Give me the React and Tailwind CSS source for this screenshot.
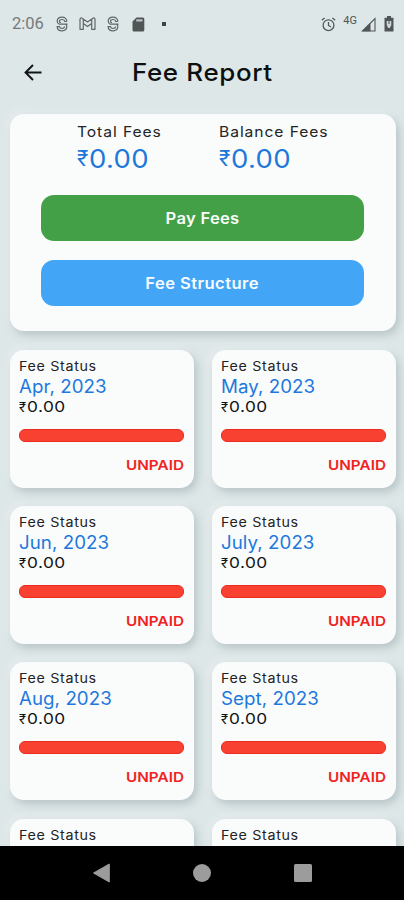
const months = ["Apr, 2023", "May, 2023", "Jun, 2023", "July, 2023", "Aug, 2023", "Sept, 2023"];

const cardShadow =
  "shadow-[3px_4px_8px_rgba(120,140,145,0.38),-3px_-3px_7px_rgba(255,255,255,0.3)]";

function SwirlIcon() {
  return (
    <svg width="12" height="16" viewBox="0 0 12 16" fill="none" stroke="#5f6666" strokeWidth="1.2">
      <path d="M10.800 5.500C10.800 2.800 9 1.200 6 1.200S1.200 2.800 1.200 5.300c0 1.500.7 2.500 2 2.900h8.300M10.800 5.500H8.700C8.500 4.200 7.500 3.500 6 3.500s-2.500.7-2.500 1.900c0 .8.500 1.100 1.500 1.100M9.500 8.200c.9.400 1.300 1.200 1.300 2.400 0 2.600-1.800 4.200-4.800 4.200s-4.800-1.600-4.800-4.100h2.300c.2 1.200 1 1.800 2.500 1.800s2.500-.7 2.500-1.900" />
    </svg>
  );
}

function MailIcon() {
  return (
    <svg width="17" height="14" viewBox="0 0 17 14" fill="none" stroke="#5f6666" strokeWidth="1.2" strokeLinejoin="round">
      <path d="M1 12.300V2.300C1 1 2.400.6 3.400 1.400L8.500 5l5.100-3.600C14.600.6 16 1 16 2.300v10h-3.300V6.400L8.500 9.400 4.300 6.400v5.900zM4.300 6.400V2.300M12.700 6.400V2.300" />
    </svg>
  );
}

function SdCardIcon() {
  return (
    <svg width="13" height="15" viewBox="0 0 13 15">
      <path d="M4.500.5h6.300A1.500 1.500 0 0 1 12.300 2v11a1.500 1.500 0 0 1-1.500 1.500H2A1.500 1.500 0 0 1 .5 13V4.500z" fill="#505656" />
      <path d="M4.200 2.300h6.300v2.200H4.200z" fill="#b9c1c1" />
    </svg>
  );
}

function AlarmIcon() {
  return (
    <svg width="15" height="15" viewBox="0 0 15 15" fill="none" stroke="#535959" strokeWidth="1.300">
      <circle cx="7.500" cy="8.200" r="5.400" />
      <path d="M7.500 5v3.500l2.500 1.500M.8 3.300 3.600 1M14.200 3.300 11.400 1" />
    </svg>
  );
}

function SignalIcon() {
  return (
    <svg width="15" height="15" viewBox="0 0 15 15">
      <path d="M1.500 14 14 1.500V14z" fill="none" stroke="#505656" strokeWidth="1.100" />
      <path d="M1 14.300 9.500 6v8.300z" fill="#505656" />
    </svg>
  );
}

function BatteryIcon() {
  return (
    <svg width="10" height="16" viewBox="0 0 10 16">
      <path d="M3 0h4v1.800h2.500V15.500H.5V1.800H3z" fill="#505656" />
      <path d="M2.700 5h4.600v4L5.800 12H4.200L2.700 9z" fill="#cdd5d5" />
      <path d="M5 5v3" stroke="#505656" strokeWidth="1" />
    </svg>
  );
}

function StatusBar() {
  return (
    <div className="flex h-12 shrink-0 items-center pl-3 pr-[10px]">
      <span className="w-[44px] whitespace-nowrap font-['Roboto',sans-serif] text-[16.500px] leading-5 text-[#747a7a]">2:06</span>
      <SwirlIcon />
      <div className="ml-[11px]"><MailIcon /></div>
      <div className="ml-[11px]"><SwirlIcon /></div>
      <div className="ml-[13px]"><SdCardIcon /></div>
      <div className="ml-[17px] size-1 bg-[#3f4545]" />
      <div className="ml-auto pr-[1px]"><AlarmIcon /></div>
      <span className="ml-[6px] -mt-1.5 font-['Roboto',sans-serif] text-[11px] leading-3 text-[#505656]">4G</span>
      <div className="ml-[4px]"><SignalIcon /></div>
      <div className="ml-[8px]"><BatteryIcon /></div>
    </div>
  );
}

function Total({ label }) {
  return (
    <div>
      <div className="origin-left scale-x-[1.08] whitespace-nowrap text-[14.500px] leading-5 tracking-[0.850px] text-[#252525]">{label}</div>
      <div className="flex items-center text-[25px] leading-[34px] text-[#1d78da]">
        <span className="mr-[1px] text-[21px]">₹</span>
        <span className="origin-left scale-x-[1.1] tracking-[0.300px]">0.00</span>
      </div>
    </div>
  );
}

function FeeCard({ month }) {
  return (
    <div className={`h-[138px] rounded-[14px] bg-[#fafcfc] pl-[9px] pr-[10px] pt-[6px] ${cardShadow}`}>
      <div className="origin-left scale-x-[1.1] text-[13px] leading-5 tracking-[0.600px] text-[#222]">Fee Status</div>
      {month && (
        <>
          <div className="origin-left scale-x-[1.04] whitespace-nowrap pt-px text-[18px] leading-5 tracking-[0.050px] text-[#1f78dc]">{month}</div>
          <div className="flex items-center text-[15px] leading-5 text-[#111]">
            <span className="mr-[1px] text-[13px]">₹</span>
            <span className="origin-left scale-x-[1.15] tracking-[0.400px]">0.00</span>
          </div>
          <div className="mt-[12px] h-[13px] rounded-[6px] border border-[#ee2b1f] bg-[#f94132]" />
          <div className="mt-[13px] origin-right scale-x-[1.13] text-right text-[13.500px] font-semibold leading-5 tracking-[0.050px] text-[#f02320]">UNPAID</div>
        </>
      )}
    </div>
  );
}

export default function App() {
  return (
    <div className="flex h-[900px] w-[404px] flex-col overflow-hidden bg-[#dee7e8] font-['Inter','Noto_Sans',sans-serif]">
      <StatusBar />
      <header className="flex h-[50px] shrink-0 items-center pl-[23px]">
        <svg width="20" height="20" viewBox="0 0 20 20" fill="none" stroke="#111414" strokeWidth="1.900">
          <path d="M18.500 9.500H2.500M10 2 2.500 9.500 10 17" />
        </svg>
        <h1 className="ml-[89px] origin-left scale-x-[1.08] whitespace-nowrap text-[24px] font-medium leading-8 tracking-[0.600px] text-[#0d1010]">Fee Report</h1>
      </header>
      <main className="min-h-0 flex-1 overflow-hidden pl-[10px] pr-[8px] pt-4">
        <section className={`h-[217px] rounded-[14px] bg-[#fafcfc] pl-[31px] pr-[32px] pt-[8px] ${cardShadow}`}>
          <div className="grid grid-cols-[142px_1fr] pl-[36px]">
            <Total label="Total Fees" />
            <Total label="Balance Fees" />
          </div>
          <button className="mt-[19px] block h-[46px] w-full rounded-[13px] bg-[#43a047] text-[#fafffa]">
            <span className="inline-block scale-x-[1.07] text-[15.500px] font-semibold tracking-[0.250px]">Pay Fees</span>
          </button>
          <button className="mt-[19px] block h-[46px] w-full rounded-[13px] bg-[#42a5f5] text-[#f7fcff]">
            <span className="inline-block scale-x-[1.07] text-[15.500px] font-semibold tracking-[0.400px]">Fee Structure</span>
          </button>
        </section>
        <section className="mt-[19px] grid grid-cols-2 gap-x-[18px] gap-y-[18.200px]">
          {months.map((m) => (
            <FeeCard key={m} month={m} />
          ))}
          <FeeCard />
          <FeeCard />
        </section>
      </main>
      <nav className="flex h-[54.500px] shrink-0 items-center justify-between bg-black pl-[92px] pr-[92px]">
        <svg width="18" height="20" viewBox="0 0 18 20"><path d="M1.500 10 17.300 1v18z" fill="#9c9c9c" stroke="#9c9c9c" strokeLinejoin="round" /></svg>
        <div className="size-[18px] rounded-full bg-[#9c9c9c]" />
        <div className="size-[18px] rounded-[1.500px] bg-[#9c9c9c]" />
      </nav>
    </div>
  );
}
